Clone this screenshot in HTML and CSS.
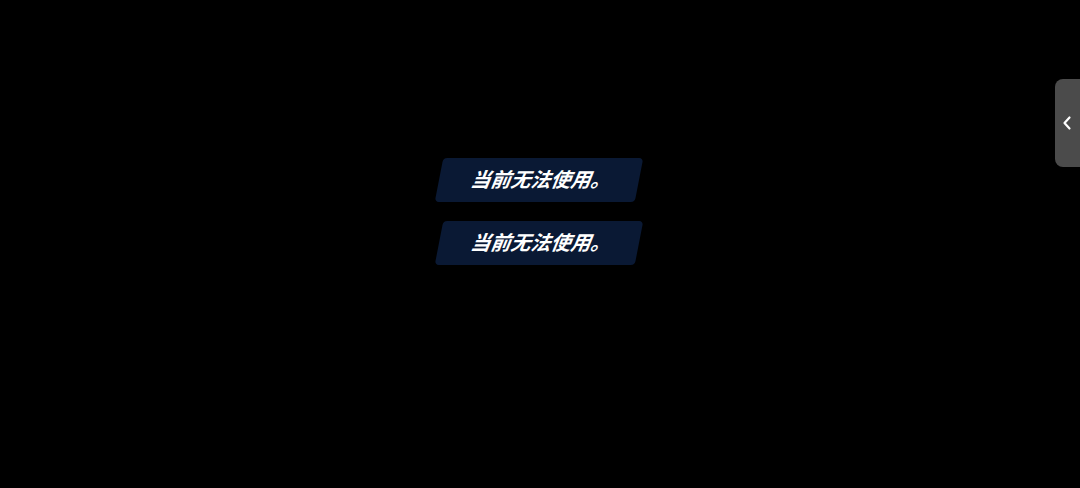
FILE: index.html
```html
<!DOCTYPE html>
<html lang="zh-CN">
<head>
<meta charset="utf-8">
<title>当前无法使用</title>
<link rel="stylesheet" href="styles.css">
</head>
<body>
<main class="stage">
  <div class="toast"><span class="toast-text">当前无法使用。</span></div>
  <div class="toast"><span class="toast-text">当前无法使用。</span></div>
</main>
<button class="side-tab" aria-label="展开">
  <svg width="12" height="16" viewBox="0 0 12 16"><path d="M8.5 2.5 L3.5 8 L8.5 13.5" fill="none" stroke="#fff" stroke-width="2.2" stroke-linecap="round" stroke-linejoin="round"/></svg>
</button>
</body>
</html>
```
FILE: styles.css
```css
html, body {
  margin: 0;
  padding: 0;
  background: #000;
  width: 1080px;
  height: 488px;
  overflow: hidden;
  font-family: "Noto Sans CJK SC", "Noto Sans", sans-serif;
}
.stage {
  display: flex;
  flex-direction: column;
  align-items: center;
  gap: 19px;
  padding-top: 158px;
  padding-right: 3px;
}
.toast {
  width: 200px;
  height: 44px;
  background: #0a1934;
  border-radius: 4px;
  transform: skewX(-11deg);
  display: flex;
  align-items: center;
  justify-content: center;
}
.toast-text {
  transform: skewX(2deg);
  color: #fff;
  font-size: 20px;
  font-weight: 700;
  font-style: italic;
  letter-spacing: 0;
  padding-left: 4px;
  padding-bottom: 3px;
  line-height: 1;
}
.side-tab {
  position: absolute;
  right: 0;
  top: 79px;
  width: 25px;
  height: 88px;
  border: none;
  padding: 0;
  background: #4b4b4b;
  border-radius: 8px 0 0 8px;
  display: flex;
  align-items: center;
  justify-content: center;
}
.side-tab svg {
  margin-left: -2px;
}
```
